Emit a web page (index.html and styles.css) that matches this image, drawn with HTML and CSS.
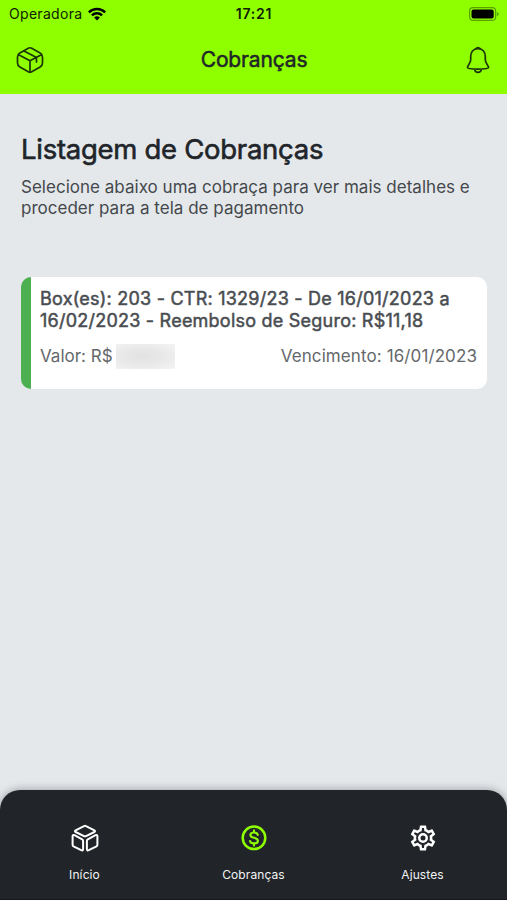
FILE: index.html
```html
<!DOCTYPE html>
<html lang="pt-BR">
<head>
<meta charset="utf-8">
<title>Cobranças</title>
<link rel="stylesheet" href="styles.css">
</head>
<body>
<header class="header">
  <div class="status">
    <div class="carrier"><span class="carrier-name">Operadora</span>
      <svg class="wifi" viewBox="0 0 18 14"><path d="M0 4.400a13 13 0 0 1 18 0L16.300 6.200a10.500 10.500 0 0 0-14.600 0zM3 7.500a8.700 8.700 0 0 1 12 0l-1.800 1.800a6.100 6.100 0 0 0-8.400 0zM6.100 10.600a4.300 4.300 0 0 1 5.800 0L9 13.600z"/></svg>
    </div>
    <span class="clock">17:21</span>
    <svg class="battery" viewBox="0 0 30 14"><rect class="battery-case" x=".6" y=".6" width="26" height="12.800" rx="3.500"/><rect x="2.500" y="2.500" width="22.200" height="9" rx="2"/><path class="battery-tip" d="M27.800 5v4.200q2-.8 2-2.100T27.800 5z"/></svg>
  </div>
  <div class="toolbar">
    <svg class="tool-icon" viewBox="0 0 28 28"><path d="M12.300 2.200q1.700-.9 3.400 0l8.400 4.700q2.400 1.400 2.400 4v6.200q0 2.600-2.400 4l-8.400 4.700q-1.700.9-3.400 0l-8.400-4.700q-2.400-1.400-2.400-4v-6.200q0-2.600 2.400-4zM2.200 8.500 14 14.800l11.800-6.300M14 14.800v11.500M8 4.900l12.500 6.700v4.300"/></svg>
    <h1 class="title">Cobranças</h1>
    <svg class="tool-icon" viewBox="0 0 28 28"><path d="M14 2.600c-5 0-7.300 3.700-7.300 8v3.200c0 3.300-3.300 5.800-3.300 7.700 0 1.400 4.800 1.600 10.600 1.600s10.600-.2 10.600-1.600c0-1.900-3.300-4.400-3.300-7.700v-3.200c0-4.300-2.300-8-7.300-8zM11.600 2.800q2.400-2.600 4.800 0M10.500 23.200q.6 3.200 3.500 3.200t3.500-3.200"/></svg>
  </div>
</header>
<main class="content">
  <h2 class="heading">Listagem de Cobranças</h2>
  <p class="intro">Selecione abaixo uma cobraça para ver mais detalhes e<br>proceder para a tela de pagamento</p>
  <article class="card">
    <h3 class="card-title">Box(es): 203 - CTR: 1329/23 - De 16/01/2023 a<br>16/02/2023 - Reembolso de Seguro: R$11,18</h3>
    <div class="card-row">
      <div class="amount"><span>Valor: R$</span><span class="hidden-value"></span></div>
      <span class="due">Vencimento: 16/01/2023</span>
    </div>
  </article>
</main>
<nav class="tabs">
  <a class="tab"><svg class="tab-icon" viewBox="0 0 30 30"><path class="cube" d="M14 3.100q1-.5 2 0l8.400 4.300q1.200.8 0 1.600l-8.400 4.100q-1 .5-2 0L5.600 9q-1.200-.8 0-1.600zM4.500 12.200q-1.900-.9-1.900 1.100v8.500q0 1 .9 1.500l7.700 3.900q1.900.9 1.900-1.100v-8.200q0-1.100-.9-1.600zM25.500 12.200q1.900-.9 1.900 1.100v8.500q0 1-.9 1.500l-7.700 3.900q-1.900.9-1.900-1.100v-8.200q0-1.100.9-1.600z"/></svg><span>Início</span></a>
  <a class="tab"><svg class="tab-icon" viewBox="0 0 30 30"><circle class="coin" cx="15" cy="14.800" r="11.300"/><path class="coin dollar" d="M18.800 11.900q-.6-2.400-3.800-2.400-3.600 0-3.600 2.500 0 2 3.600 2.800 3.900.9 3.900 3.100 0 2.500-3.900 2.500-3.400 0-4-2.400M15 7.300v2.200M15 20.400v2.200"/></svg><span>Cobranças</span></a>
  <a class="tab"><svg class="tab-icon" viewBox="0 0 24 24"><path class="gear" d="M12,8A4,4 0 0,1 16,12A4,4 0 0,1 12,16A4,4 0 0,1 8,12A4,4 0 0,1 12,8M12,10A2,2 0 0,0 10,12A2,2 0 0,0 12,14A2,2 0 0,0 14,12A2,2 0 0,0 12,10M10,22C9.75,22 9.54,21.82 9.5,21.58L9.13,18.93C8.5,18.68 7.96,18.34 7.44,17.94L4.95,18.95C4.73,19.03 4.46,18.95 4.34,18.73L2.34,15.27C2.21,15.05 2.27,14.78 2.46,14.63L4.57,12.97L4.5,12L4.57,11L2.46,9.37C2.27,9.22 2.21,8.95 2.34,8.73L4.34,5.27C4.46,5.05 4.73,4.96 4.95,5.05L7.44,6.05C7.96,5.66 8.5,5.32 9.13,5.07L9.5,2.42C9.54,2.18 9.75,2 10,2H14C14.25,2 14.46,2.18 14.5,2.42L14.87,5.07C15.5,5.32 16.04,5.66 16.56,6.05L19.05,5.05C19.27,4.96 19.54,5.05 19.66,5.27L21.66,8.73C21.79,8.95 21.73,9.22 21.54,9.37L19.43,11L19.5,12L19.43,13L21.54,14.63C21.73,14.78 21.79,15.05 21.66,15.27L19.66,18.73C19.54,18.95 19.27,19.04 19.05,18.95L16.56,17.95C16.04,18.34 15.5,18.68 14.87,18.93L14.5,21.58C14.46,21.82 14.25,22 14,22H10M11.25,4L10.88,6.61C9.68,6.86 8.62,7.5 7.85,8.39L5.44,7.35L4.69,8.65L6.8,10.2C6.4,11.37 6.4,12.64 6.8,13.8L4.68,15.36L5.43,16.66L7.86,15.62C8.63,16.5 9.68,17.14 10.87,17.38L11.24,20H12.76L13.13,17.39C14.32,17.14 15.37,16.5 16.14,15.62L18.57,16.66L19.32,15.36L17.2,13.81C17.6,12.64 17.6,11.37 17.2,10.2L19.31,8.65L18.56,7.35L16.15,8.39C15.38,7.5 14.32,6.86 13.12,6.62L12.75,4H11.25Z"/></svg><span>Ajustes</span></a>
</nav>
</body>
</html>
```
FILE: styles.css
```css
* { box-sizing: border-box; margin: 0; padding: 0; }
body {
  height: 900px;
  display: flex;
  flex-direction: column;
  overflow: hidden;
  background: #e4e8eb;
  color: #212529;
  font-family: Inter, sans-serif;
  white-space: nowrap;
}
.header { height: 94px; background: #8fff00; }
.status {
  height: 27px;
  padding: 0 8px 0 9px;
  display: grid;
  grid-template-columns: 1fr auto 1fr;
  align-items: center;
  color: #102000;
}
.carrier { display: flex; align-items: center; gap: 6px; }
.carrier-name { font-size: 14px; letter-spacing: .3px; }
.wifi { width: 18px; height: 14px; fill: #000; }
.clock { font-size: 14px; font-weight: 600; letter-spacing: .8px; }
.battery { width: 30px; height: 14px; justify-self: end; }
.battery-case { fill: none; stroke: #59a000; stroke-width: 1.2; }
.battery-tip { fill: #59a000; }
.toolbar {
  height: 66px;
  padding: 0 15px 0 16px;
  display: flex;
  align-items: center;
  justify-content: space-between;
}
.tool-icon { width: 28px; height: 28px; fill: none; stroke: #1c3508; stroke-width: 1.7; stroke-linejoin: round; stroke-linecap: round; }
.title { margin-bottom: 2px; font-size: 21px; font-weight: 400; letter-spacing: -.15px; -webkit-text-stroke: .5px; }
.content { flex: 1; padding: 37px 20px 0 21px; }
.heading { font-size: 27.5px; line-height: 36px; font-weight: 400; letter-spacing: -.28px; -webkit-text-stroke: .6px; }
.intro { margin-top: 10px; font-size: 17px; line-height: 21px; letter-spacing: .02px; color: #44484c; }
.card {
  height: 112px;
  margin-top: 58px;
  padding: 11px 10px 0 9px;
  border-left: 10px solid #4caf50;
  border-radius: 10px;
  background: #fff;
}
.card-title { font-size: 18px; line-height: 22px; font-weight: 400; letter-spacing: .23px; color: #494d51; -webkit-text-stroke: .5px; }
.card-row { margin-top: 12px; display: flex; justify-content: space-between; align-items: center; font-size: 17px; line-height: 25px; color: #64686b; }
.amount { display: flex; align-items: center; gap: 3px; }
.due { letter-spacing: .1px; }
.hidden-value { width: 59px; height: 25px; background: radial-gradient(ellipse at 45% 50%, #e2e2e2, #e8e8e8 45%, #f4f4f4 100%); }
.tabs {
  height: 110px;
  padding-top: 33px;
  display: grid;
  grid-template-columns: repeat(3, 1fr);
  border-radius: 20px 20px 0 0;
  border-bottom: 1px solid #15171a;
  background: #212529;
  box-shadow: 0 0 10px rgba(0, 0, 0, .35);
  color: #f2f3f4;
}
.tab { display: flex; flex-direction: column; align-items: center; gap: 14px; font-size: 12px; line-height: 16px; letter-spacing: .1px; }
.tab-icon { width: 30px; height: 30px; fill: none; stroke-linejoin: round; stroke-linecap: round; }
.cube { stroke: #fff; stroke-width: 2; }
.coin { stroke: #8fff00; stroke-width: 2.5; }
.dollar { stroke-width: 2.1; }
.gear { fill: #fff; }
```
